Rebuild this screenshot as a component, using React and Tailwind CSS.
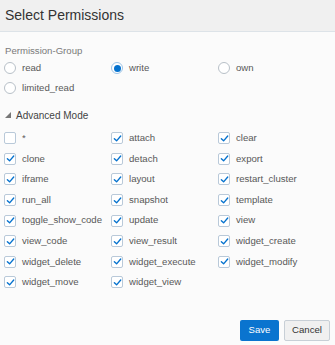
import React, { useState } from "react";

const perms = [
  "*", "attach", "clear",
  "clone", "detach", "export",
  "iframe", "layout", "restart_cluster",
  "run_all", "snapshot", "template",
  "toggle_show_code", "update", "view",
  "view_code", "view_result", "widget_create",
  "widget_delete", "widget_execute", "widget_modify",
  "widget_move", "widget_view",
];

const groups = ["read", "write", "own", "limited_read"];

const Radio = ({ checked }) => (
  <span
    className={`flex items-center justify-center w-[12px] h-[12px] rounded-full border bg-white ${
      checked ? "border-[#9cc3e6]" : "border-[#b8c0c8]"
    }`}
  >
    {checked && <span className="w-[7px] h-[7px] rounded-full bg-[#0572ce]" />}
  </span>
);

const Checkbox = ({ checked }) => (
  <span className="flex items-center justify-center w-[12px] h-[12px] rounded-[2px] border border-[#b9c9d9] bg-white">
    {checked && (
      <svg width="9" height="9" viewBox="0 0 10 10">
        <polyline
          points="1.5,5.2 4,7.6 8.6,2.2"
          fill="none"
          stroke="#0572ce"
          strokeWidth="1.5"
          strokeLinecap="round"
          strokeLinejoin="round"
        />
      </svg>
    )}
  </span>
);

const App = () => {
  const [group, setGroup] = useState("write");
  const [checked, setChecked] = useState(
    Object.fromEntries(perms.map((p) => [p, p !== "*"]))
  );

  return (
    <div className="w-[335px] h-[345px] bg-[#fbfbfb] flex flex-col font-['Liberation_Sans',Arial,sans-serif] text-[#585858] text-[9.6px]">
      {/* Header */}
      <div className="h-[32px] shrink-0 bg-[#f0f0f0] border-b border-[#dde3e8] flex items-center px-[5px] pb-[2px]">
        <div className="text-[14px] leading-[16px] text-[#333]">Select Permissions</div>
      </div>

      <div className="flex-1 flex flex-col pl-[4px]">
        {/* Permission group */}
        <div className="mt-[12px] h-[14px] flex items-center pl-[1px] text-[#7a7a7a]">
          Permission-Group
        </div>
        <div className="grid grid-cols-[107px_107px_107px] auto-rows-[20px]">
          {groups.map((g) => (
            <button
              key={g}
              onClick={() => setGroup(g)}
              className="flex items-center gap-[6px] text-left"
            >
              <Radio checked={group === g} />
              <span>{g}</span>
            </button>
          ))}
        </div>

        {/* Advanced mode */}
        <div className="mt-[7px] h-[20px] flex items-center gap-[5px] pl-[1px] text-[#444]">
          <svg width="6" height="6" viewBox="0 0 6 6">
            <polygon points="6,0 6,6 0,6" fill="#777" />
          </svg>
          <span className="text-[10px]">Advanced Mode</span>
        </div>
        <div className="mt-[3px] grid grid-cols-[107px_107px_107px] auto-rows-[20.6px]">
          {perms.map((p) => (
            <button
              key={p}
              onClick={() => setChecked({ ...checked, [p]: !checked[p] })}
              className="flex items-center gap-[6px] text-left"
            >
              <Checkbox checked={checked[p]} />
              <span>{p}</span>
            </button>
          ))}
        </div>

        {/* Footer */}
        <div className="mt-auto mb-[4px] flex justify-end gap-[5px] pr-[5px]">
          <button className="w-[39px] h-[21px] bg-[#0a74cf] text-white rounded-[2px]">
            Save
          </button>
          <button className="w-[46px] h-[21px] bg-[#f0f0f0] border border-[#c8cfd6] text-[#333] rounded-[2px]">
            Cancel
          </button>
        </div>
      </div>
    </div>
  );
};

export default App;
